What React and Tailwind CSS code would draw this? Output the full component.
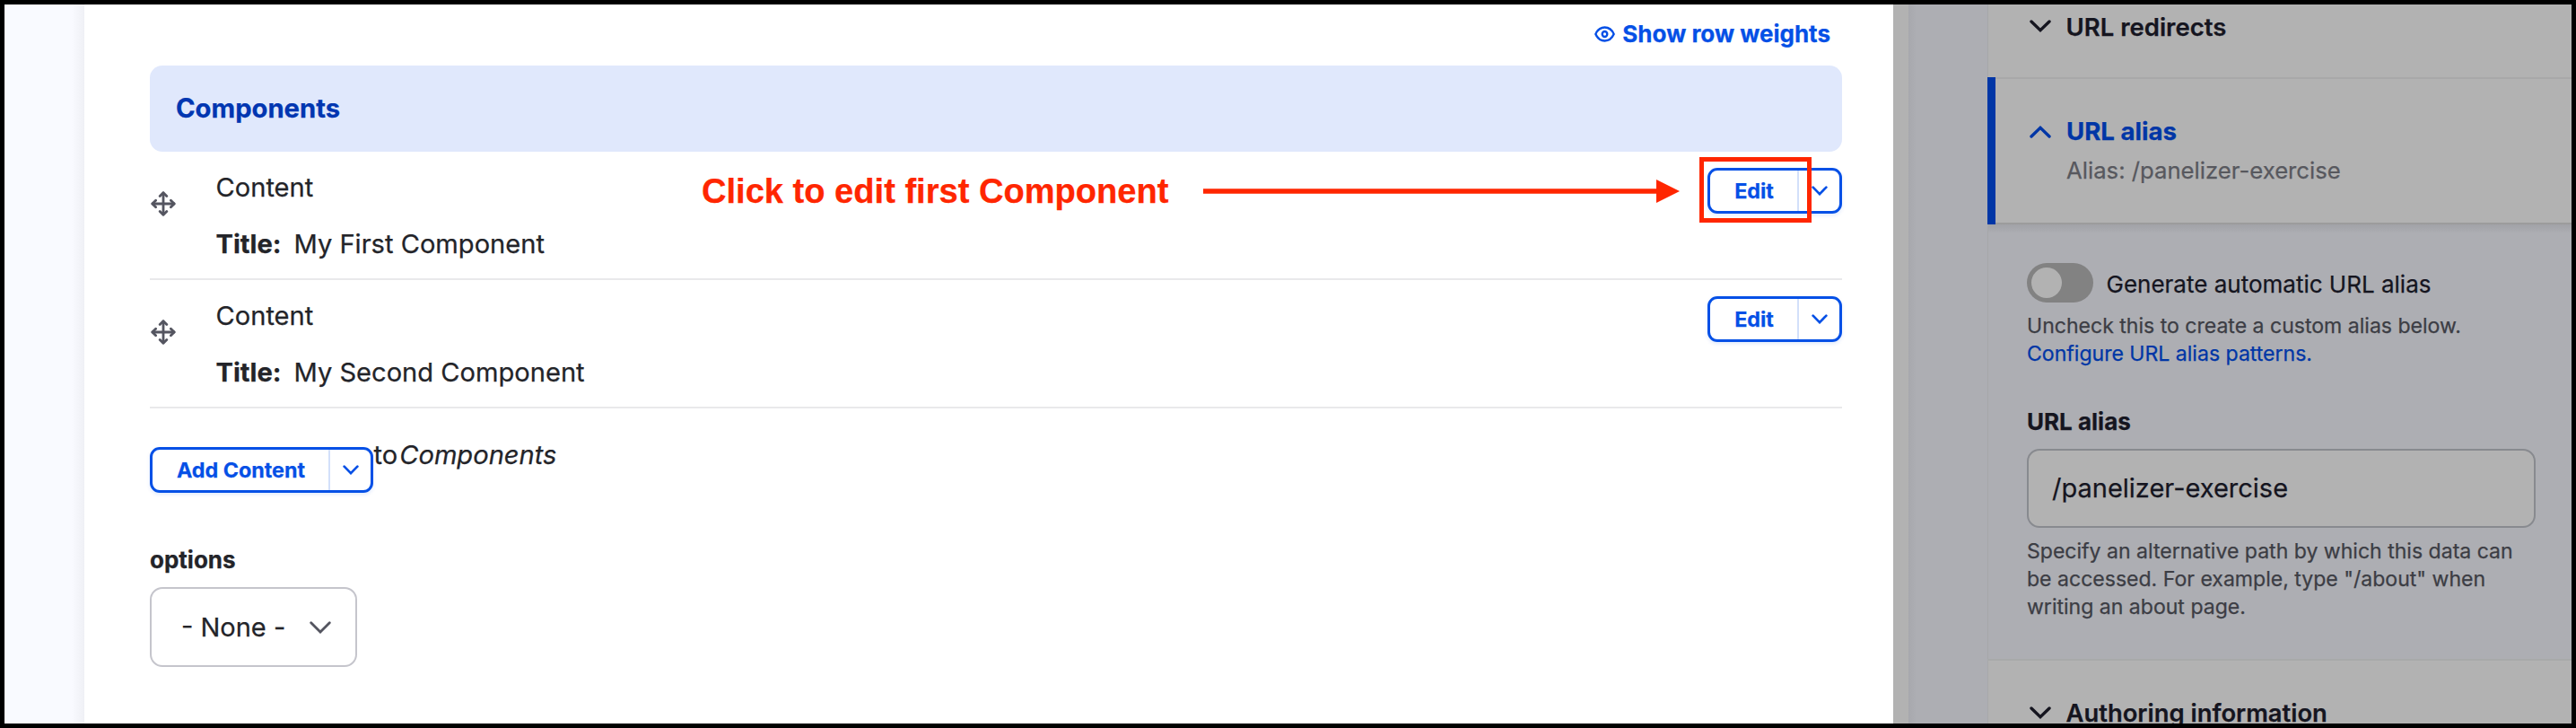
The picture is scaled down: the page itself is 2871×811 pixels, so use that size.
const BLUE = "#0550e6";

function Chevron({ w, h, sw, color, up, className = "" }) {
  return (
    <svg className={"shrink-0 " + className} width={w} height={h} viewBox={`0 0 ${w} ${h}`} fill="none" stroke={color} strokeWidth={sw} strokeLinecap="round" strokeLinejoin="miter">
      {up ? (
        <path d={`M${sw / 2 + 0.3} ${h - sw / 2 - 0.3}L${w / 2} ${sw * 0.7}L${w - sw / 2 - 0.3} ${h - sw / 2 - 0.3}`} />
      ) : (
        <path d={`M${sw / 2 + 0.3} ${sw / 2 + 0.3}L${w / 2} ${h - sw * 0.7}L${w - sw / 2 - 0.3} ${sw / 2 + 0.3}`} />
      )}
    </svg>
  );
}

function MoveIcon() {
  return (
    <svg className="mt-[44px] ml-[1px] shrink-0" width="28" height="28" viewBox="0 0 28 28" fill="none" stroke="#545560" strokeWidth="2.8" strokeLinecap="round" strokeLinejoin="round">
      <path d="M14 2V26M2 14H26" />
      <path d="M10.2 5.6L14 1.8L17.8 5.6M10.2 22.4L14 26.2L17.8 22.4M5.6 10.2L1.8 14L5.6 17.8M22.4 10.2L26.2 14L22.4 17.8" />
    </svg>
  );
}

function EyeIcon() {
  return (
    <svg width="23" height="18" viewBox="0 0 24 18" preserveAspectRatio="none" fill="none" stroke={BLUE} strokeWidth="2.5">
      <path d="M1.4 9C3.6 4.3 7.4 1.6 12 1.6S20.4 4.3 22.6 9C20.4 13.7 16.6 16.4 12 16.4S3.6 13.7 1.4 9Z" strokeLinejoin="round" />
      <circle cx="12" cy="9" r="2.9" />
    </svg>
  );
}

function SplitButton({ label, wide }) {
  return (
    <div className={(wide ? "w-[249px]" : "w-[150px]") + " flex h-[51px] shrink-0 rounded-[11px] border-3 border-[#0550e6] bg-white shadow-[0_2px_4px_rgba(5,80,230,0.12)]"}>
      <button className="flex-1 border-r-2 border-[#d3e0fa] pl-[1px] text-center text-[23.3px] leading-[43px] font-bold text-[#0550e6]">{label}</button>
      <button className="flex w-[45px] items-center justify-center">
        <Chevron w={18} h={11} sw={2.7} color={BLUE} />
      </button>
    </div>
  );
}

function ComponentRow({ title }) {
  return (
    <div className="flex h-[143px] items-start border-b-2 border-[#e9e9eb]">
      <MoveIcon />
      <div className="ml-[44.5px] flex flex-1 flex-col gap-[27px] pt-[22px] text-[29.1px] leading-[36px]">
        <div>Content</div>
        <div className="flex gap-[14px]">
          <span className="font-bold">Title:</span>
          <span>{title}</span>
        </div>
      </div>
      <div className="pt-[18px]">
        <SplitButton label="Edit" />
      </div>
    </div>
  );
}

function Annotation() {
  return (
    <div className="absolute top-[170px] left-[777px] flex h-[73px] items-center">
      <span className="w-[558px] pt-[2px] font-['Liberation_Sans',sans-serif] text-[38.1px] leading-[44px] font-bold whitespace-nowrap text-[#ff2600]">Click to edit first Component</span>
      <svg className="mt-[3px]" width="533" height="28" viewBox="0 0 533 28" fill="#ff2600">
        <path d="M1 11.2H506V1L532 14L506 27V16.8H1Z" />
      </svg>
      <div className="ml-[20.5px] h-[73px] w-[125px] border-[5px] border-[#ff2600]" />
    </div>
  );
}

export default function App() {
  return (
    <div className="relative flex h-[811px] w-[2871px] overflow-hidden border-[5px] border-black bg-white font-['Inter',sans-serif] text-[#232429] [-webkit-text-stroke:0.25px]">
      <div className="flex w-[89px] shrink-0 justify-end bg-[#f9faff]">
        <div className="w-[14px] bg-linear-to-r from-[#f9faff] to-[#eff0f5]" />
      </div>

      <main className="w-[2016px] shrink-0 bg-white pr-[57px] pl-[73px]">
        <div className="flex h-[68px] justify-end pt-[14.5px] pr-[13px] text-[26px] leading-[36px] font-bold text-[#0550e6]">
          <div className="flex h-[36px] items-center gap-[8px]">
            <EyeIcon />
            Show row weights
          </div>
        </div>
        <div className="flex h-[95.5px] items-center rounded-[14px] bg-[#e0e8fc] pl-[29px] text-[29.2px] font-bold text-[#0036b1]">Components</div>
        <ComponentRow title="My First Component" />
        <ComponentRow title="My Second Component" />

        <div className="mt-[33px] flex items-start text-[29.1px] leading-[36px]">
          <div className="mt-[10.5px]">
            <SplitButton label="Add Content" wide />
          </div>
          <span className="mt-[1px] ml-[0.5px]">to</span>
          <em className="mt-[1px] ml-[2px]">Components</em>
        </div>

        <div className="mt-[57px] text-[26px] leading-[36px] font-bold">options</div>
        <div className="mt-[12px] flex h-[89px] w-[231px] items-center justify-between rounded-[14px] border-2 border-[#c5c5cc] pr-[27px] pl-[33px] text-[29px]">
          - None -
          <Chevron w={24} h={14} sw={2.8} color="#545560" />
        </div>
      </main>

      <div className="flex flex-1">
        <div className="w-[16.5px] shrink-0 bg-[#b2b2b2]" />
        <div className="w-[88.5px] shrink-0 bg-[#adaeb3]">
          <div className="h-full w-[9px] bg-linear-to-r from-[#a7a8ad] to-[#adaeb3]" />
        </div>
        <aside className="flex flex-1 flex-col bg-[#adaeb3] text-[#15151f]">
          <div className="flex h-[81px] shrink-0 items-start border-l border-[#a6a7a9] bg-[#b2b2b2] pt-[6.5px] pl-[46px] text-[27.5px] leading-[36px] font-semibold">
            <Chevron w={24} h={14} sw={3.4} color="#15151f" className="mt-[10px] mr-[16.5px]" />
            URL redirects
          </div>

          <div className="flex h-[164px] shrink-0 bg-[#b2b2b2]">
            <div className="w-[9px] bg-[#0036a6]" />
            <div className="flex flex-1 items-start border-t-2 border-b-2 border-t-[#a8a8a9] border-b-[#9c9c9c] pt-[40px] pl-[38px]">
              <Chevron up w={24} h={14} sw={3.4} color="#0036a6" className="mt-[12px] mr-[17px]" />
              <div className="flex flex-col gap-[8px] leading-[36px]">
                <div className="text-[27.6px] font-bold text-[#0036a6]">URL alias</div>
                <div className="text-[25.7px] text-[#57585e]">Alias: /panelizer-exercise</div>
              </div>
            </div>
          </div>

          <div className="h-[484px] shrink-0 border-l border-[#a6a7a9]">
            <div className="h-[10px] bg-linear-to-b from-[#a1a2a7] to-[#adaeb3]" />
            <div className="flex flex-col pt-[33px] pl-[43px]">
              <div className="flex h-[44px] items-center">
                <div className="flex h-[44px] w-[74px] items-center rounded-full bg-[#828282] pl-[5px]">
                  <div className="size-[34px] rounded-full bg-[#b2b2b2]" />
                </div>
                <span className="mt-[3px] ml-[14.5px] text-[26px] leading-[36px]">Generate automatic URL alias</span>
              </div>
              <div className="mt-[11px] text-[23.05px] leading-[31px] text-[#3c3d44]">
                <div>Uncheck this to create a custom alias below.</div>
                <div className="text-[#0036a6]">Configure URL alias patterns.</div>
              </div>
              <div className="mt-[42px] text-[26px] leading-[36px] font-bold">URL alias</div>
              <div className="mt-[12px] flex h-[88px] w-[567px] items-center rounded-[14px] border-2 border-[#888a8f] bg-[#b2b2b2] pl-[26px] text-[29px]">/panelizer-exercise</div>
              <p className="mt-[11px] text-[23.05px] leading-[31px] text-[#3c3d44]">
                Specify an alternative path by which this data can
                <br />
                be accessed. For example, type "/about" when
                <br />
                writing an about page.
              </p>
            </div>
          </div>

          <div className="flex h-[80px] shrink-0 items-start border-t-2 border-l border-[#a8a9aa] bg-[#b2b2b2] pt-[40px] pl-[46px] text-[27.4px] leading-[36px] font-semibold">
            <Chevron w={24} h={14} sw={3.4} color="#15151f" className="mt-[11px] mr-[16.5px]" />
            Authoring information
          </div>
        </aside>
      </div>

      <Annotation />
    </div>
  );
}
